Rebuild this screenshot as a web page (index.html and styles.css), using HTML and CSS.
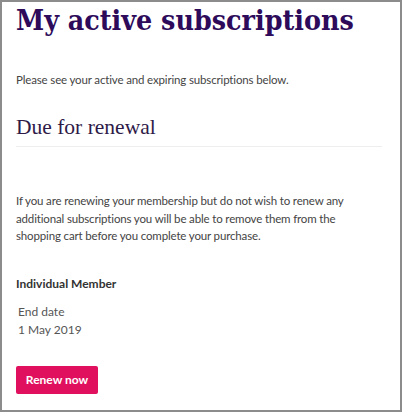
FILE: index.html
```html
<!DOCTYPE html>
<html lang="en">
<head>
<meta charset="utf-8">
<title>My active subscriptions</title>
<link rel="stylesheet" href="styles.css">
</head>
<body>
<main class="frame">
  <h1 class="title">My active subscriptions</h1>
  <p class="intro">Please see your active and expiring subscriptions below.</p>
  <section class="renewal">
    <h2 class="section-title">Due for renewal</h2>
    <p class="note">If you are renewing your membership but do not wish to renew any additional subscriptions you will be able to remove them from the shopping cart before you complete your purchase.</p>
    <div class="item">
      <h3 class="item-name">Individual Member</h3>
      <dl class="item-meta">
        <dt>End date</dt>
        <dd>1 May 2019</dd>
      </dl>
      <button class="btn-renew" type="button">Renew now</button>
    </div>
  </section>
</main>
</body>
</html>
```
FILE: styles.css
```css
* { box-sizing: border-box; }
html, body { margin: 0; padding: 0; background: #fff; }
.frame {
  width: 402px;
  height: 412px;
  border: 2px solid #8c8c8c;
  padding: 0 14px;
  overflow: hidden;
  font-family: "Lato", "Open Sans", sans-serif;
  color: #444;
}
.title {
  margin: 0;
  font-family: "DejaVu Serif Condensed", "DejaVu Serif", serif;
  font-stretch: condensed;
  font-weight: bold;
  font-size: 28.3px;
  line-height: 36px;
  color: #2d0a5a;
  white-space: nowrap;
}
.intro {
  margin: 33px 0 0;
  font-size: 11.5px;
  letter-spacing: -0.15px;
  line-height: 18px;
}
.section-title {
  margin: 24px 4px 0 0;
  font-family: "Liberation Serif", serif;
  font-weight: normal;
  font-size: 21.5px;
  line-height: 28px;
  color: #2e1a47;
  padding-bottom: 5px;
  border-bottom: 1px solid #eeeeee;
}
.note {
  margin: 45px 0 0;
  max-width: 332px;
  font-size: 11.5px;
  letter-spacing: -0.15px;
  line-height: 17.5px;
  color: #444;
}
.item-name {
  margin: 30px 0 0;
  font-size: 12px;
  font-weight: 700;
  line-height: 18px;
  color: #333;
}
.item-meta {
  margin: 10px 0 0 2px;
  font-size: 12px;
  line-height: 18px;
  color: #555;
}
.item-meta dt, .item-meta dd { margin: 0; }
.btn-renew {
  display: block;
  margin-top: 27px;
  width: 82px;
  height: 28px;
  border: 0;
  border-radius: 2px;
  background: #e0105e;
  color: #fff;
  font-family: "Lato", sans-serif;
  font-size: 12px;
  font-weight: 700;
  padding: 0;
}
```
